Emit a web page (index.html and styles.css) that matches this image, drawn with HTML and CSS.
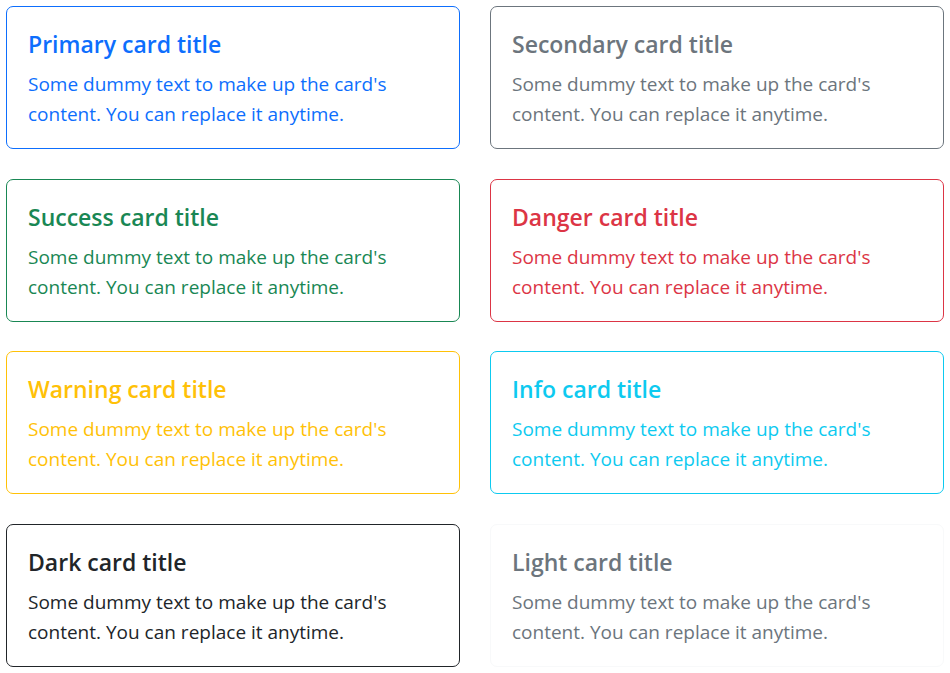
FILE: index.html
```html
<!DOCTYPE html>
<html lang="en">
<head>
  <meta charset="UTF-8">
  <title>Cards</title>
  <link rel="stylesheet" href="styles.css">
</head>
<body>
  <div class="grid">
    <div class="card border-primary text-primary">
      <h5 class="card-title">Primary card title</h5>
      <p class="card-text">Some dummy text to make up the card's content. You can replace it anytime.</p>
    </div>
    <div class="card border-secondary text-secondary">
      <h5 class="card-title">Secondary card title</h5>
      <p class="card-text">Some dummy text to make up the card's content. You can replace it anytime.</p>
    </div>
    <div class="card border-success text-success">
      <h5 class="card-title">Success card title</h5>
      <p class="card-text">Some dummy text to make up the card's content. You can replace it anytime.</p>
    </div>
    <div class="card border-danger text-danger">
      <h5 class="card-title">Danger card title</h5>
      <p class="card-text">Some dummy text to make up the card's content. You can replace it anytime.</p>
    </div>
    <div class="card border-warning text-warning">
      <h5 class="card-title">Warning card title</h5>
      <p class="card-text">Some dummy text to make up the card's content. You can replace it anytime.</p>
    </div>
    <div class="card border-info text-info">
      <h5 class="card-title">Info card title</h5>
      <p class="card-text">Some dummy text to make up the card's content. You can replace it anytime.</p>
    </div>
    <div class="card border-dark text-dark">
      <h5 class="card-title">Dark card title</h5>
      <p class="card-text">Some dummy text to make up the card's content. You can replace it anytime.</p>
    </div>
    <div class="card border-light text-secondary">
      <h5 class="card-title">Light card title</h5>
      <p class="card-text">Some dummy text to make up the card's content. You can replace it anytime.</p>
    </div>
  </div>
</body>
</html>
```

FILE: styles.css
```css
body {
  margin: 0;
  font-family: "Open Sans", "Noto Sans", sans-serif;
  background: #fff;
}

.grid {
  display: grid;
  grid-template-columns: 454px 454px;
  column-gap: 30px;
  row-gap: 29.7px;
  padding: 6px;
}

.card {
  border: 1px solid;
  border-radius: 7px;
  padding: 22px 20px 19px 21px;
}

.card-title {
  margin: 0 0 10px;
  font-size: 23px;
  font-weight: 600;
  line-height: 30px;
}

.card-text {
  margin: 0;
  font-size: 19px;
  line-height: 30px;
}

.border-primary { border-color: #0d6efd; }
.border-secondary { border-color: #6c757d; }
.border-success { border-color: #198754; }
.border-danger { border-color: #dc3545; }
.border-warning { border-color: #ffc107; }
.border-info { border-color: #0dcaf0; }
.border-dark { border-color: #212529; }
.border-light { border-color: #f8f9fa; }

.text-primary { color: #0d6efd; }
.text-secondary { color: #6c757d; }
.text-success { color: #198754; }
.text-danger { color: #dc3545; }
.text-warning { color: #ffc107; }
.text-info { color: #0dcaf0; }
.text-dark { color: #212529; }
```
